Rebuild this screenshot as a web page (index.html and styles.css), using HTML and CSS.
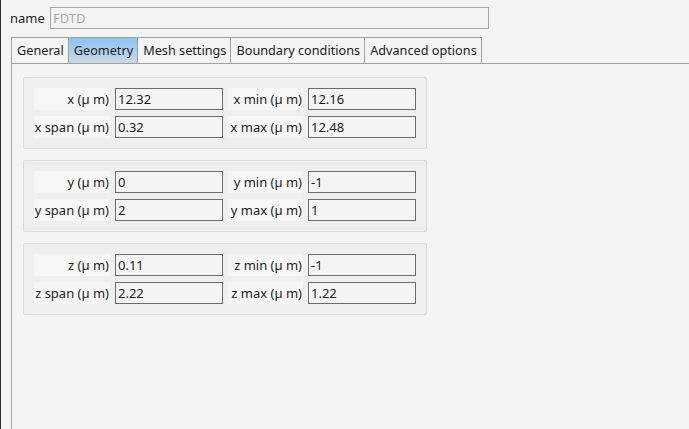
FILE: index.html
```html
<!DOCTYPE html>
<html lang="en">
<head>
    <meta charset="UTF-8">
    <title>FDTD - Geometry</title>
    <link rel="stylesheet" href="styles.css">
</head>
<body>
    <div class="window">
        <!-- Object name -->
        <div class="name-row">
            <span class="name-label">name</span>
            <div class="name-input">FDTD</div>
        </div>

        <!-- Tabs -->
        <div class="tabs">
            <div class="tab">General</div>
            <div class="tab active">Geometry</div>
            <div class="tab">Mesh settings</div>
            <div class="tab">Boundary conditions</div>
            <div class="tab">Advanced options</div>
        </div>

        <div class="pane">
            <div class="group">
                <div class="field-label">x (µ m)</div>
                <div class="field">12.32</div>
                <div class="field-label">x min (µ m)</div>
                <div class="field">12.16</div>
                <div class="field-label">x span (µ m)</div>
                <div class="field">0.32</div>
                <div class="field-label">x max (µ m)</div>
                <div class="field">12.48</div>
            </div>

            <div class="group">
                <div class="field-label">y (µ m)</div>
                <div class="field">0</div>
                <div class="field-label">y min (µ m)</div>
                <div class="field">-1</div>
                <div class="field-label">y span (µ m)</div>
                <div class="field">2</div>
                <div class="field-label">y max (µ m)</div>
                <div class="field">1</div>
            </div>

            <div class="group">
                <div class="field-label">z (µ m)</div>
                <div class="field">0.11</div>
                <div class="field-label">z min (µ m)</div>
                <div class="field">-1</div>
                <div class="field-label">z span (µ m)</div>
                <div class="field">2.22</div>
                <div class="field-label">z max (µ m)</div>
                <div class="field">1.22</div>
            </div>
        </div>
    </div>
</body>
</html>
```

FILE: styles.css
```css
html, body {
    margin: 0;
    height: 100%;
}
body {
    font-family: "Noto Sans", "Open Sans", sans-serif;
    font-size: 13px;
    color: #1d1d24;
    background-color: #f4f4f4;
    box-shadow: inset 1px 0 #2e2e2e;
    overflow: hidden;
}
.window {
    height: 100%;
    display: flex;
    flex-direction: column;
}
.name-row {
    display: flex;
    align-items: center;
    height: 22px;
    margin-top: 7px;
    padding-left: 10px;
}
.name-label {
    width: 40px;
}
.name-input {
    width: 435px;
    height: 20px;
    line-height: 20px;
    padding-left: 2px;
    border: 1px solid #a6a6a6;
    color: #a3acb6;
}
.tabs {
    display: flex;
    margin-top: 8px;
    margin-left: 11px;
    height: 26px;
}
.tab {
    padding: 0 4px 0 5px;
    font-size: 12.7px;
    line-height: 25px;
    border: 1px solid #a0a0a0;
    border-bottom: none;
    margin-right: -1px;
    white-space: nowrap;
}
.tab.active {
    background: linear-gradient(#8cc3f4, #cad9e4);
}
.pane {
    flex: 1;
    margin-left: 11px;
    border-top: 1px solid #a0a0a0;
    border-left: 1px solid #a0a0a0;
    padding: 13px 0 0 11px;
}
.group {
    display: grid;
    grid-template-columns: 76px 108px 75px 108px;
    grid-auto-rows: 22px;
    column-gap: 5px;
    row-gap: 6px;
    width: 382px;
    padding: 10px 10px;
    margin-bottom: 11px;
    background-color: #efefef;
    border: 1px solid #dcdcdc;
    border-radius: 2px;
}
.field-label {
    background-color: #f6f6f6;
    text-align: right;
    line-height: 22px;
    padding-right: 1px;
    white-space: nowrap;
}
.field {
    border: 1px solid #6c6c6c;
    background-color: #f4f4f4;
    line-height: 20px;
    padding-left: 2px;
}
```
